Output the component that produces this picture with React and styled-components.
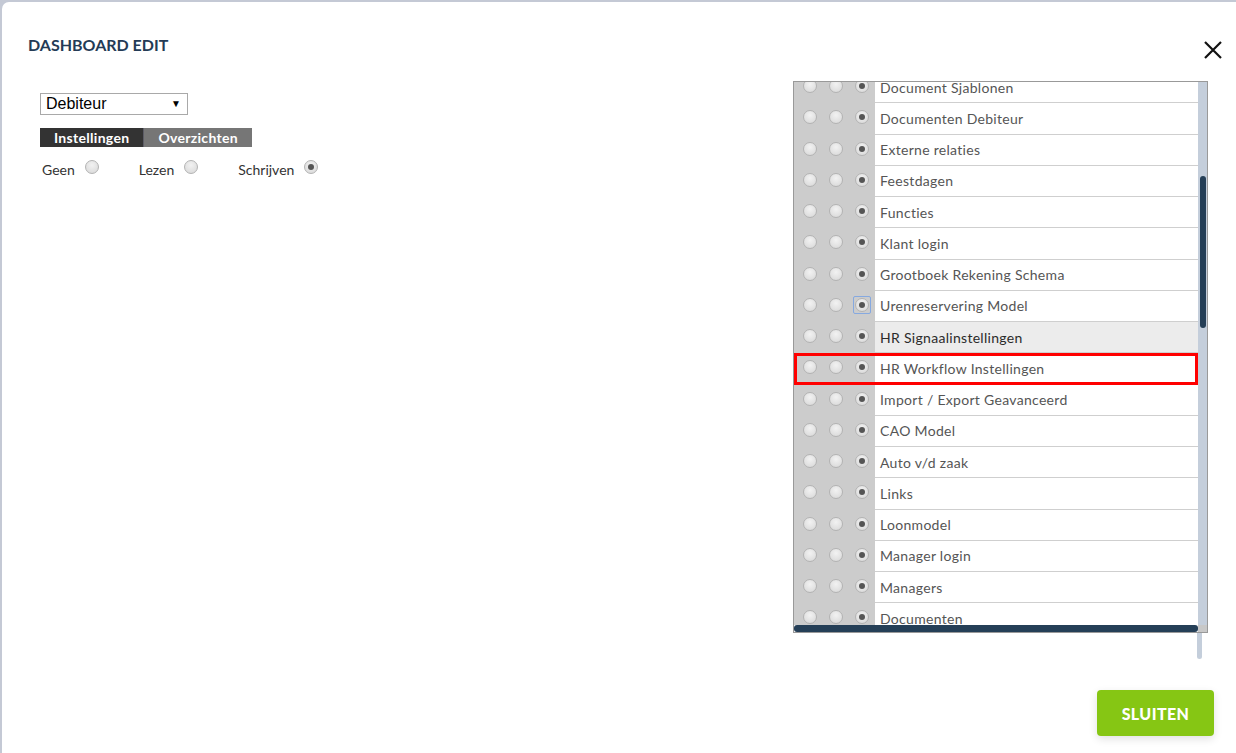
import React from "react";
import styled, { createGlobalStyle } from "styled-components";

const GlobalStyle = createGlobalStyle`
  html, body {
    margin: 0;
    padding: 0;
    background: #c4c9d5;
    font-family: "Lato", "Open Sans", sans-serif;
  }
  * { box-sizing: border-box; }
`;

const rights = [
  "Document Sjablonen",
  "Documenten Debiteur",
  "Externe relaties",
  "Feestdagen",
  "Functies",
  "Klant login",
  "Grootboek Rekening Schema",
  "Urenreservering Model",
  "HR Signaalinstellingen",
  "HR Workflow Instellingen",
  "Import / Export Geavanceerd",
  "CAO Model",
  "Auto v/d zaak",
  "Links",
  "Loonmodel",
  "Manager login",
  "Managers",
  "Documenten",
];

export default function App() {
  return (
    <>
      <GlobalStyle />
      <Modal>
        <Header>
          <Title>DASHBOARD EDIT</Title>
          <CloseButton aria-label="close">
            <svg width="20" height="20" viewBox="0 0 20 20">
              <path d="M2 2 L18 18 M18 2 L2 18" stroke="#111" strokeWidth="2.2" fill="none" />
            </svg>
          </CloseButton>
        </Header>

        <Body>
          <Settings>
            <Select>
              <span>Debiteur</span>
              <Arrow>▼</Arrow>
            </Select>
            <Tabs>
              <Tab active>Instellingen</Tab>
              <Tab>Overzichten</Tab>
            </Tabs>
            <AccessRow>
              <AccessOption>
                Geen <Radio />
              </AccessOption>
              <AccessOption>
                Lezen <Radio />
              </AccessOption>
              <AccessOption>
                Schrijven <Radio checked />
              </AccessOption>
            </AccessRow>
          </Settings>

          <ListColumn>
            <ListBox>
              <Viewport>
                <Rows>
                  {rights.map((name) => (
                    <Row key={name} flagged={name === "HR Workflow Instellingen"}>
                      <RadioCell>
                        <Radio />
                        <Radio />
                        {name === "Urenreservering Model" ? (
                          <FocusRing>
                            <Radio checked />
                          </FocusRing>
                        ) : (
                          <Radio checked />
                        )}
                      </RadioCell>
                      <NameCell hovered={name === "HR Signaalinstellingen"}>{name}</NameCell>
                    </Row>
                  ))}
                </Rows>
              </Viewport>
              <VTrack>
                <VThumb />
              </VTrack>
              <HThumb />
              <Corner />
            </ListBox>
            <OuterTrack />
          </ListColumn>
        </Body>

        <Footer>
          <CloseAction>SLUITEN</CloseAction>
        </Footer>
      </Modal>
    </>
  );
}

const Modal = styled.div`
  margin: 2px 0 0 2px;
  height: 751px;
  background: #ffffff;
  border-top-left-radius: 7px;
  display: flex;
  flex-direction: column;
`;

const Header = styled.div`
  display: flex;
  justify-content: space-between;
  align-items: center;
  padding: 28px 13px 0 26px;
  height: 56px;
`;

const Title = styled.h1`
  margin: 0;
  font-size: 16px;
  font-weight: 700;
  color: #243b56;
  letter-spacing: 0;
`;

const CloseButton = styled.button`
  border: 0;
  background: none;
  padding: 0;
  margin-top: 12px;
  width: 20px;
  height: 20px;
  cursor: pointer;
`;

const Body = styled.div`
  flex: 1;
  display: flex;
  justify-content: space-between;
  padding: 23px 28px 0 38px;
`;

const Settings = styled.div`
  display: flex;
  flex-direction: column;
  padding-top: 12px;
`;

const Select = styled.div`
  width: 148px;
  height: 22px;
  border: 1px solid #a9a9a9;
  display: flex;
  align-items: center;
  justify-content: space-between;
  padding: 0 6px 0 5px;
  font-family: "Liberation Sans", Arial, sans-serif;
  font-size: 16px;
  color: #000;
`;

const Arrow = styled.span`
  font-size: 10px;
  line-height: 1;
`;

const Tabs = styled.div`
  display: flex;
  margin-top: 13px;
`;

const Tab = styled.div`
  height: 19px;
  line-height: 19px;
  padding: 0 14px;
  font-size: 14px;
  font-weight: 700;
  color: #ffffff;
  background: ${({ active }) => (active ? "#333333" : "#767676")};
  border-left: ${({ active }) => (active ? "0" : "1px solid #5c5c66")};
  letter-spacing: 0.3px;
`;

const AccessRow = styled.div`
  display: flex;
  align-items: center;
  padding: 14px 0 0 2px;
  font-size: 14px;
  color: #333;
`;

const AccessOption = styled.label`
  display: flex;
  align-items: center;
  gap: 10px;
  margin-right: 40px;
  & > span {
    margin-top: -5px;
  }
`;

const Radio = styled.span`
  display: inline-block;
  flex: none;
  position: relative;
  width: 14px;
  height: 14px;
  border-radius: 50%;
  border: 1px solid #b3b3b3;
  background: radial-gradient(circle at 50% 35%, #f2f2f2 0%, #dcdcdc 80%);
  &::after {
    content: "";
    display: ${({ checked }) => (checked ? "block" : "none")};
    position: absolute;
    left: 3px;
    top: 3px;
    width: 6px;
    height: 6px;
    border-radius: 50%;
    background: #555;
  }
`;

const FocusRing = styled.span`
  display: flex;
  align-items: center;
  justify-content: center;
  flex: none;
  width: 18px;
  height: 18px;
  margin: 0 -2px;
  border: 1px solid #86a9e0;
  border-radius: 2px;
`;

const ListColumn = styled.div`
  display: flex;
  flex-direction: column;
  align-items: flex-end;
`;

const ListBox = styled.div`
  width: 415px;
  height: 552px;
  border: 1px solid #999;
  display: grid;
  grid-template-columns: 1fr 9px;
  grid-template-rows: 1fr 7px;
  background: #fff;
`;

const Viewport = styled.div`
  overflow: hidden;
`;

const Rows = styled.div`
  margin-top: -10px;
`;

const Row = styled.div`
  display: grid;
  grid-template-columns: 81px 1fr;
  height: 31.25px;
  outline: ${({ flagged }) => (flagged ? "3px solid #ff0000" : "none")};
  outline-offset: -3px;
  position: relative;
  z-index: ${({ flagged }) => (flagged ? 1 : 0)};
`;

const RadioCell = styled.div`
  background: #cccccc;
  display: flex;
  align-items: center;
  gap: 12px;
  padding: 0 0 3px 9px;
`;

const NameCell = styled.div`
  display: flex;
  align-items: center;
  padding: 0 0 0 5px;
  border-bottom: 1px solid #cfcfcf;
  background: ${({ hovered }) => (hovered ? "#ececec" : "#ffffff")};
  color: ${({ hovered }) => (hovered ? "#2b2b2b" : "#555555")};
  font-size: 14px;
  letter-spacing: 0.3px;
`;

const VTrack = styled.div`
  background: #c4cedb;
  padding: 94px 1px 0 2px;
`;

const VThumb = styled.div`
  height: 152px;
  background: #253f57;
  border-radius: 3px;
`;

const HThumb = styled.div`
  background: #253f57;
  border-radius: 3px;
`;

const Corner = styled.div`
  background: #c8c8c8;
`;

const OuterTrack = styled.div`
  width: 5px;
  height: 26px;
  margin-right: 6px;
  background: #c4cedb;
  border-radius: 0 0 3px 3px;
`;

const Footer = styled.div`
  display: flex;
  justify-content: flex-end;
  padding: 0 22px 17px 0;
`;

const CloseAction = styled.button`
  width: 117px;
  height: 46px;
  border: 0;
  border-radius: 4px;
  background: #86c614;
  color: #ffffff;
  font-family: "Lato", "Open Sans", sans-serif;
  font-size: 16px;
  font-weight: 900;
  letter-spacing: 0.4px;
  box-shadow: 0 3px 8px rgba(0, 0, 0, 0.12);
  cursor: pointer;
`;
